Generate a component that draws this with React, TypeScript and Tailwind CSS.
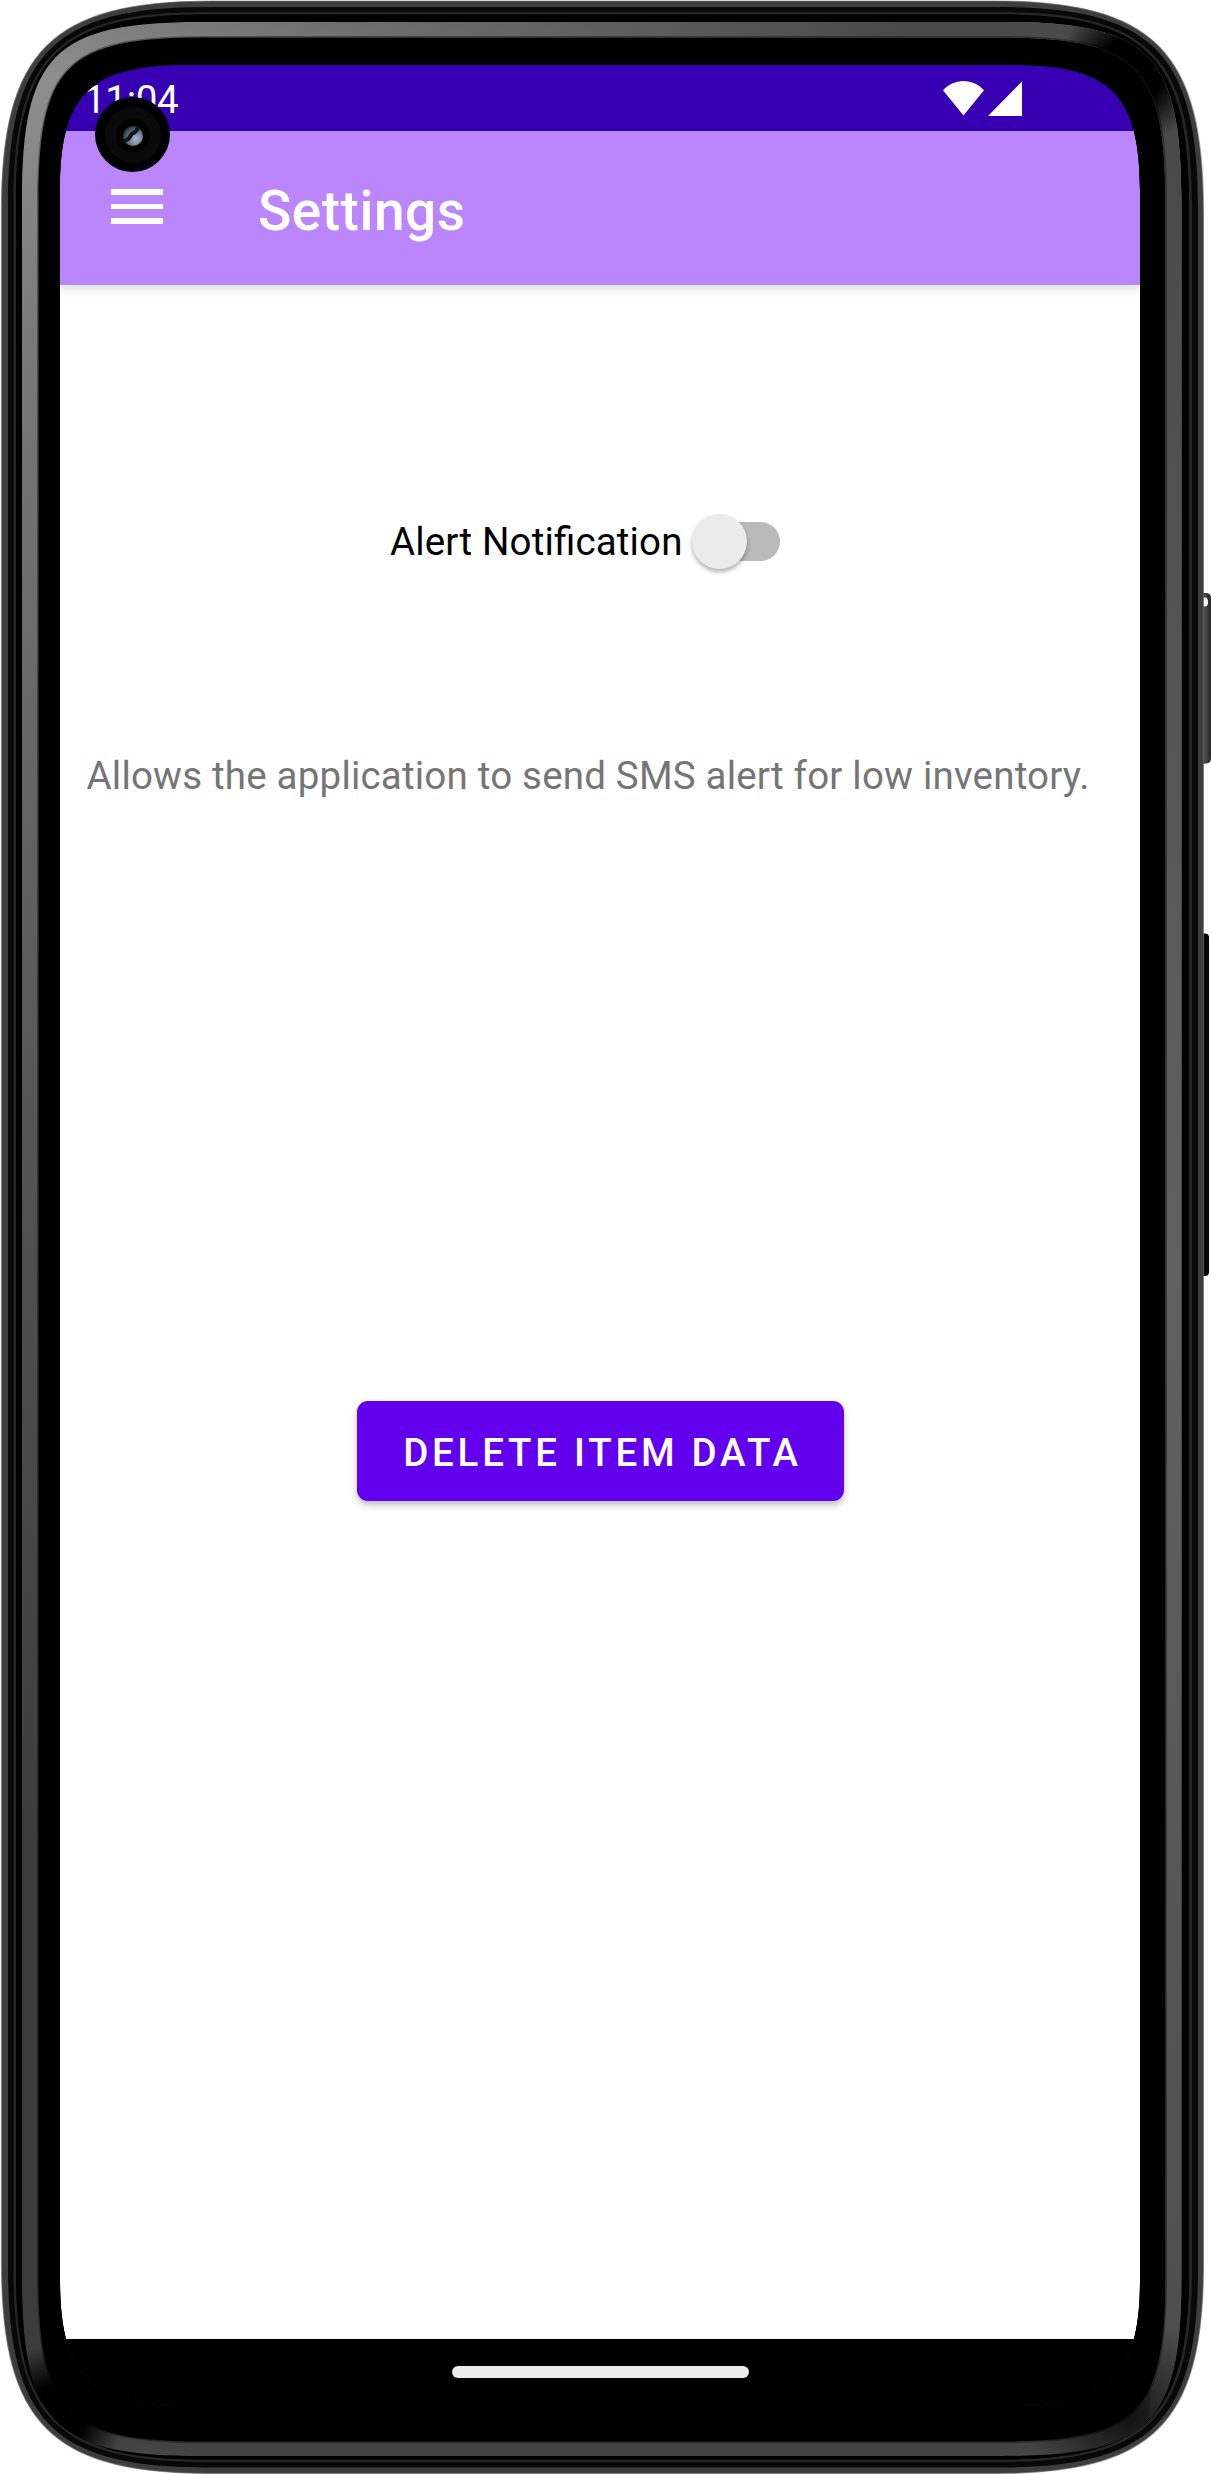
import React from "react";

/** Closed rounded path whose corners ease in over `l` px, with handles at `k` px. */
function squircle(x0: number, y0: number, x1: number, y1: number, l: number, k: number) {
  return [
    `M${x0} ${y0 + l}C${x0} ${y0 + k} ${x0 + k} ${y0} ${x0 + l} ${y0}`,
    `L${x1 - l} ${y0}C${x1 - k} ${y0} ${x1} ${y0 + k} ${x1} ${y0 + l}`,
    `L${x1} ${y1 - l}C${x1} ${y1 - k} ${x1 - k} ${y1} ${x1 - l} ${y1}`,
    `L${x0 + l} ${y1}C${x0 + k} ${y1} ${x0} ${y1 - k} ${x0} ${y1 - l}Z`,
  ].join("");
}

const BODY = squircle(1.5, 1, 1203.5, 2473.5, 210, 50);
const EDGE = squircle(8, 7, 1198, 2467.5, 200, 46);
const GROOVE = squircle(13.5, 12, 1192, 2462, 192, 44);
const GROOVE_IN = squircle(16, 14.5, 1189, 2459.5, 188, 43);
const RING_OUT = squircle(22, 22, 1181.5, 2456, 180, 32);
const RING_IN = squircle(38.5, 37.5, 1165.5, 2441.5, 165, 28);
const SCREEN = squircle(60, 65, 1140, 2405, 125, 30);

function DeviceFrame() {
  return (
    <svg className="pointer-events-none absolute inset-0" width="1211" height="2474" viewBox="0 0 1211 2474" aria-hidden="true">
      <defs>
        <linearGradient id="ring" x1="0" y1="0" x2="0" y2="1">
          <stop offset="0" stopColor="#7c7c7c" />
          <stop offset="0.03" stopColor="#8e8e8e" />
          <stop offset="0.15" stopColor="#777777" />
          <stop offset="0.5" stopColor="#505050" />
          <stop offset="0.75" stopColor="#3c3c3c" />
          <stop offset="0.98" stopColor="#3c3c3c" />
          <stop offset="1" stopColor="#4c4c4c" />
        </linearGradient>
        <linearGradient id="ringRight" x1="0" y1="0" x2="0" y2="1">
          <stop offset="0" stopColor="#484848" />
          <stop offset="0.5" stopColor="#616161" />
          <stop offset="1" stopColor="#4c4c4c" />
        </linearGradient>
        <linearGradient id="topFade" x1="0" y1="0" x2="1" y2="0">
          <stop offset="0" stopColor="#4a4a4a" stopOpacity="0" />
          <stop offset="1" stopColor="#4a4a4a" />
        </linearGradient>
        <radialGradient id="dark">
          <stop offset="0" stopColor="#000" />
          <stop offset="0.45" stopColor="#000" />
          <stop offset="1" stopColor="#000" stopOpacity="0" />
        </radialGradient>
        <radialGradient id="dim">
          <stop offset="0" stopColor="#000" stopOpacity="0.7" />
          <stop offset="1" stopColor="#000" stopOpacity="0" />
        </radialGradient>
        <linearGradient id="power" x1="0" y1="0" x2="1" y2="0">
          <stop offset="0" stopColor="#454545" />
          <stop offset="0.6" stopColor="#4c4a49" />
          <stop offset="1" stopColor="#222" />
        </linearGradient>
        <radialGradient id="lens" cx="0.65" cy="0.65" r="0.7">
          <stop offset="0" stopColor="#a9b9cf" />
          <stop offset="0.6" stopColor="#667388" />
          <stop offset="1" stopColor="#252c3b" />
        </radialGradient>
        <clipPath id="ringClip">
          <path d={RING_OUT + RING_IN} clipRule="evenodd" />
        </clipPath>
      </defs>

      <rect x="1198" y="593.5" width="12.5" height="169.5" rx="4" fill="url(#power)" stroke="#2a2a2a" strokeWidth="1" />
      <ellipse cx="1205" cy="602" rx="3" ry="4.5" fill="#fff" />
      <rect x="1198" y="933.5" width="11" height="342.5" rx="4" fill="#060606" />

      <path d={BODY + SCREEN} fillRule="evenodd" fill="#3c3e3c" />
      <path d={BODY} fill="none" stroke="#6b6d6a" strokeOpacity="0.6" strokeWidth="1.2" />
      <path d={EDGE + SCREEN} fillRule="evenodd" fill="#080808" />
      <path d={GROOVE + GROOVE_IN} fillRule="evenodd" fill="#262626" />
      <path d={GROOVE_IN + SCREEN} fillRule="evenodd" fill="#000" />

      <g clipPath="url(#ringClip)">
        <rect width="1211" height="2474" fill="url(#ring)" />
        <rect x="60" width="840" height="60" fill="url(#topFade)" />
        <rect x="900" width="311" height="60" fill="#4a4a4a" />
        <rect x="1150" y="60" width="61" height="2414" fill="url(#ringRight)" />
        <rect x="1050" y="20" width="101" height="100" fill="#4a4a4a" />
        <ellipse cx="1130" cy="72" rx="74" ry="72" fill="url(#dark)" />
        <ellipse cx="54" cy="2418" rx="68" ry="72" fill="url(#dark)" />
        <ellipse cx="1128" cy="2416" rx="100" ry="100" fill="url(#dim)" />
      </g>
      <path d={RING_IN} fill="none" stroke="#000" strokeOpacity="0.35" strokeWidth="3" />

      <circle cx="132.5" cy="134.5" r="37.5" fill="#000" />
      <circle cx="133" cy="135" r="28" fill="#0a0a0a" />
      <circle cx="133" cy="135.5" r="17" fill="#020203" />
      <circle cx="133" cy="136" r="10" fill="url(#lens)" />
      <path d="M126 140C130 140 130 134 133 133C136 132 137 130 138 128" fill="none" stroke="#10141d" strokeWidth="4" strokeLinecap="round" />
    </svg>
  );
}

function StatusBar() {
  return (
    <div className="flex h-[66px] items-center justify-between bg-[#3700b3] pl-[24px] pr-[118px] text-white">
      <span className="pt-[3px] text-[38.5px] leading-[63px] tracking-[-0.3px]">11:04</span>
      <div className="flex items-start gap-1">
        <svg width="41" height="35" viewBox="0 0 41 35" fill="currentColor" aria-hidden="true">
          <path d="M0 9.2C5.5 3.5 12.5 0 20.5 0S35.5 3.5 41 9.2L20.5 34.5Z" />
        </svg>
        <svg width="34" height="35" viewBox="0 0 34 35" fill="currentColor" aria-hidden="true">
          <path d="M34 0.5V35H0Z" />
        </svg>
      </div>
    </div>
  );
}

function AppBar() {
  return (
    <header className="relative flex h-[154px] items-center bg-[#bb86fc] pl-[51px] text-white shadow-[0_3px_10px_rgba(0,0,0,0.16)]">
      <button className="mb-[3px] flex w-[52px] flex-col gap-[9px]" aria-label="Open menu">
        <span className="h-[5.5px] w-full bg-white" />
        <span className="h-[5.5px] w-full bg-white" />
        <span className="h-[5.5px] w-full bg-white" />
      </button>
      <h1 className="ml-[95px] mt-[7px] text-[55px] font-medium leading-none tracking-[0.5px]">Settings</h1>
    </header>
  );
}

export default function App() {
  return (
    <div className="relative h-[2474px] w-[1211px] overflow-hidden bg-white px-[60px] pt-[65px] font-[Roboto,sans-serif]">
      <div className="flex h-[2340px] w-[1080px] flex-col bg-white">
        <StatusBar />
        <AppBar />
        <main className="flex flex-1 flex-col items-center">
          <label className="mt-[228px] flex h-[56px] items-center self-start pl-[330px] text-[38.5px] text-black">
            <span className="w-[302px] whitespace-nowrap pt-[2px] leading-[56px] tracking-[0.15px] [font-feature-settings:'liga']">
              Alert Notification
            </span>
            <span className="flex h-[39px] w-[88px] items-center rounded-full bg-gradient-to-r from-transparent from-30% to-[#bababa] to-30%">
              <span className="h-[55px] w-[55px] shrink-0 rounded-full bg-[#ebebeb] shadow-[0_3px_4px_rgba(0,0,0,0.3)]" />
            </span>
          </label>
          <p className="mt-[179px] self-start whitespace-nowrap pl-[26.5px] text-[38.5px] leading-[56px] tracking-[0.2px] text-[#757575]">
            Allows the application to send SMS alert for low inventory.
          </p>
          <button className="mt-[597px] h-[100px] w-[487px] rounded-[11px] bg-[#6200ee] pl-[5px] pt-[3px] text-[38.5px] font-medium leading-[97px] tracking-[3.75px] text-white shadow-[0_4px_6px_rgba(0,0,0,0.25)]">
            DELETE ITEM DATA
          </button>
        </main>
        <nav className="flex h-[66px] items-center justify-center bg-black">
          <span className="h-[12px] w-[297px] rounded-full bg-[#ebebeb]" />
        </nav>
      </div>
      <DeviceFrame />
    </div>
  );
}
